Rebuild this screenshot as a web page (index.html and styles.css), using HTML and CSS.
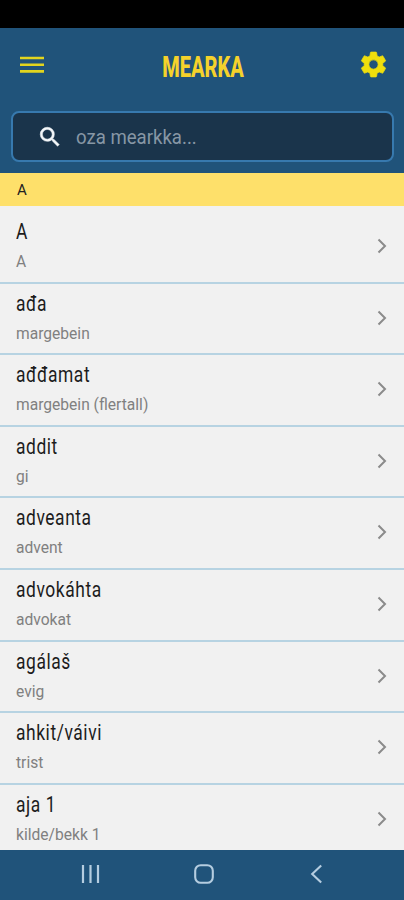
FILE: index.html
```html
<!DOCTYPE html>
<html lang="se">
<head>
  <meta charset="UTF-8">
  <meta name="viewport" content="width=device-width, initial-scale=1">
  <title>Mearka</title>
  <link rel="stylesheet" href="styles.css">
</head>
<body>

<div class="statusbar"></div>

<header class="header">
  <div class="topbar">
    <svg class="menu" width="24" height="18" viewBox="0 0 24 18"><path d="M0 2h24M0 8.7h24M0 15.4h24" stroke="#e2d51e" stroke-width="2.6"/></svg>
    <h1><span>MEARKA</span></h1>
    <svg class="gear" width="31" height="31" viewBox="0 0 24 24" fill="#f0df0c" stroke="#f0df0c" stroke-width=".6"><path d="M19.14 12.94c.04-.3.06-.61.06-.94 0-.32-.02-.64-.07-.94l2.03-1.58c.18-.14.23-.41.12-.61l-1.92-3.32c-.12-.22-.37-.29-.59-.22l-2.39.96c-.5-.38-1.03-.7-1.62-.94l-.36-2.54c-.04-.24-.24-.41-.48-.41h-3.84c-.24 0-.43.17-.47.41l-.36 2.54c-.59.24-1.13.57-1.62.94l-2.39-.96c-.22-.08-.47 0-.59.22L2.74 8.87c-.12.21-.08.47.12.61l2.03 1.58c-.05.3-.09.63-.09.94s.02.64.07.94l-2.03 1.58c-.18.14-.23.41-.12.61l1.92 3.32c.12.22.37.29.59.22l2.39-.96c.5.38 1.03.7 1.62.94l.36 2.54c.05.24.24.41.48.41h3.84c.24 0 .44-.17.47-.41l.36-2.54c.59-.24 1.13-.56 1.62-.94l2.39.96c.22.08.47 0 .59-.22l1.92-3.32c.12-.22.07-.47-.12-.61l-2.01-1.58zM12 15.6c-1.98 0-3.6-1.62-3.6-3.6s1.62-3.6 3.6-3.6 3.6 1.62 3.6 3.6-1.62 3.6-3.6 3.6z"/></svg>
  </div>
  <div class="search">
    <svg width="26" height="26" viewBox="0 0 24 24" fill="#f4f7fa" stroke="#f4f7fa" stroke-width=".5"><path d="M15.5 14h-.79l-.28-.27A6.47 6.47 0 0 0 16 9.5 6.5 6.5 0 1 0 9.5 16c1.61 0 3.09-.59 4.23-1.57l.27.28v.79l5 4.99L20.49 19l-4.99-5zm-6 0C7.01 14 5 11.99 5 9.5S7.01 5 9.5 5 14 7.01 14 9.5 11.99 14 9.5 14z"/></svg>
    <span>oza mearkka...</span>
  </div>
</header>

<div class="letter">A</div>

<main class="list" id="list"></main>

<nav class="navbar">
  <svg width="20" height="20" viewBox="0 0 20 20"><path d="M2 1v18M9.5 1v18M17 1v18" stroke="#b5cde0" stroke-width="2.2"/></svg>
  <svg width="20" height="20" viewBox="0 0 20 20"><rect x="1.2" y="1.2" width="17.6" height="17.6" rx="5.5" fill="none" stroke="#b5cde0" stroke-width="2.1"/></svg>
  <svg width="20" height="20" viewBox="0 0 20 20"><path d="M14.2 1.5 5.2 10l9 8.5" fill="none" stroke="#b5cde0" stroke-width="2.1"/></svg>
</nav>

<script>
const words = [
  ['A', 'A'],
  ['ađa', 'margebein'],
  ['ađđamat', 'margebein (flertall)'],
  ['addit', 'gi'],
  ['adveanta', 'advent'],
  ['advokáhta', 'advokat'],
  ['agálaš', 'evig'],
  ['ahkit/váivi', 'trist'],
  ['aja 1', 'kilde/bekk 1']
];
const list = document.getElementById('list');

words.forEach(([word, meaning]) => {
  list.innerHTML += `<div class="row">
    <div class="text">
      <div class="word">${word}</div>
      <div class="meaning">${meaning}</div>
    </div>
    <svg width="10" height="16" viewBox="0 0 10 16"><path d="M1.5 1.5 8 8l-6.5 6.5" fill="none" stroke="#8b8b8b" stroke-width="2"/></svg>
  </div>`;
});
</script>
</body>
</html>
```
FILE: styles.css
```css
* {
  box-sizing: border-box;
}

body {
  margin: 0;
  height: 900px;
  display: flex;
  flex-direction: column;
  overflow: hidden;
  background: #f1f1f1;
  font-family: Roboto, sans-serif;
}

svg {
  display: block;
  flex: none;
}

.statusbar {
  height: 28px;
  background: #000;
}

.header {
  height: 145px;
  padding: 0 10px 0 11px;
  background: #20537a;
}

.topbar {
  height: 83px;
  padding: 0 5px 7px 9px;
  display: flex;
  align-items: center;
  justify-content: space-between;
}

.menu {
  margin-top: -3px;
}

.gear {
  margin-top: -3px;
}

h1 {
  margin: 2px 0 0 5px;
  width: 84px;
  display: flex;
  justify-content: center;
  font-size: 29px;
  line-height: 34px;
  font-weight: 800;
  color: #f5d22b;
}

h1 span {
  transform: scaleX(0.69);
}

.search {
  height: 51px;
  padding-left: 24px;
  display: flex;
  align-items: center;
  gap: 13px;
  border: 2px solid #3779ae;
  border-radius: 8px;
  background: #1a344b;
  color: #8797a5;
  font-size: 20px;
}

.search span {
  transform: scaleX(0.93);
  transform-origin: left;
}

.letter {
  height: 33px;
  padding-left: 17px;
  line-height: 34px;
  background: #fee06a;
  color: #222;
  font-size: 15px;
}

.list {
  height: 644px;
  padding-top: 6px;
  overflow: hidden;
}

.row {
  height: 71.6px;
  padding: 6px 17px 0 16px;
  display: flex;
  justify-content: space-between;
  border-bottom: 2px solid #b7d3e2;
}

.row svg {
  margin-top: 20px;
}

.word {
  line-height: 28px;
  font-size: 21.5px;
  letter-spacing: 0.7px;
  color: #1c1c1c;
  transform: scaleX(0.81);
  transform-origin: left;
}

.meaning {
  margin-top: 6px;
  line-height: 20px;
  font-size: 15.6px;
  color: #808080;
}

.navbar {
  height: 50px;
  padding: 0 77px 2px 81px;
  display: flex;
  align-items: center;
  justify-content: space-between;
  background: #20537a;
}
```
